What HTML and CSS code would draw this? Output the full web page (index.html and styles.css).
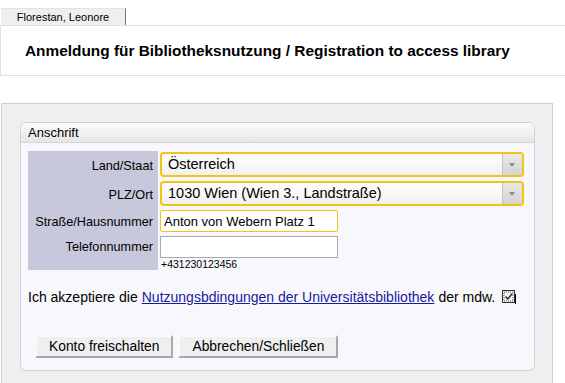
FILE: index.html
```html
<!DOCTYPE html>
<html lang="de">
<head>
    <meta charset="utf-8" />
    <title>Registrierung</title>
    <link rel="stylesheet" href="styles.css">
</head>
<body>
    <div class="tabs">
        <div class="tab">Florestan, Leonore</div>
    </div>
    <div class="header">
        <h1>Anmeldung für Bibliotheksnutzung / Registration to access library</h1>
    </div>

    <div class="panel">
        <div class="box">
            <div class="box-title">Anschrift</div>
            <div class="box-body">
                <div class="form">
                    <div class="row">
                        <div class="label">Land/Staat</div>
                        <div class="field">
                            <div class="select">
                                <span class="select-text">Österreich</span>
                                <span class="select-arrow"></span>
                            </div>
                        </div>
                    </div>
                    <div class="row">
                        <div class="label">PLZ/Ort</div>
                        <div class="field">
                            <div class="select">
                                <span class="select-text">1030 Wien (Wien 3., Landstraße)</span>
                                <span class="select-arrow"></span>
                            </div>
                        </div>
                    </div>
                    <div class="row">
                        <div class="label">Straße/Hausnummer</div>
                        <div class="field">
                            <input type="text" class="text required" value="Anton von Webern Platz 1">
                        </div>
                    </div>
                    <div class="row last">
                        <div class="label">Telefonnummer</div>
                        <div class="field">
                            <input type="text" class="text" value="">
                            <div class="hint">+431230123456</div>
                        </div>
                    </div>
                </div>

                <p class="accept">
                    Ich akzeptiere die <a href="#">Nutzungsbdingungen der Universitätsbibliothek</a> der mdw.
                    <span class="check">
                        <svg width="14" height="14" viewBox="0 0 14 14">
                            <rect x="0.5" y="0.5" width="12" height="12" fill="#f4f4f4" stroke="#333"/>
                            <rect x="2" y="2" width="9" height="9" fill="none" stroke="#555" stroke-dasharray="1 1"/>
                            <path d="M3.5 6.5 L5.8 9 L10 3.8" fill="none" stroke="#222" stroke-width="1.4"/>
                            <line x1="13.5" y1="4" x2="13.5" y2="14" stroke="#000"/>
                        </svg>
                    </span>
                </p>

                <div class="buttons">
                    <button>Konto freischalten</button>
                    <button>Abbrechen/Schließen</button>
                </div>
            </div>
        </div>
    </div>
</body>
</html>
```

FILE: styles.css
```css
body {
    margin: 0;
    font-family: "Liberation Sans", Arial, sans-serif;
    font-size: 13px;
    color: #000;
    background-color: #fff;
}
.tabs {
    padding-top: 8px;
    padding-left: 1px;
    display: flex;
}
.tab {
    width: 125px;
    height: 17px;
    line-height: 17px;
    font-size: 11px;
    text-align: center;
    background-color: #efefef;
    border-right: 1px solid #777;
    border-top: 1px solid #e4e4e4;
    box-sizing: border-box;
}
.header {
    border: 1px solid #e0e0e0;
    border-right: none;
    height: 51px;
    box-sizing: border-box;
    display: flex;
    align-items: center;
    padding-left: 24px;
}
.header h1 {
    margin: 0;
    font-size: 15.4px;
    font-weight: bold;
}
.panel {
    margin: 27px 12px 0 1px;
    background-color: #efefef;
    border: 1px solid #cbcbe0;
    border-bottom: none;
    padding: 18px 17px 12px 18px;
}
.box {
    border: 1px solid #cfcfdf;
    border-radius: 6px;
    background-color: #f8f8fc;
    overflow: hidden;
}
.box-title {
    height: 19px;
    line-height: 19px;
    padding-left: 7px;
    font-size: 13px;
    background: linear-gradient(#fbfbfb, #e6e6e6);
    border-bottom: 1px solid #d4d4dc;
}
.box-body {
    padding: 8px 10px 12px 7px;
}
.form {
    display: flex;
    flex-direction: column;
}
.row {
    display: flex;
}
.label {
    width: 130px;
    flex-shrink: 0;
    background-color: #c8c8dc;
    text-align: right;
    font-size: 12.7px;
    padding-right: 5px;
    box-sizing: border-box;
    display: flex;
    align-items: center;
    justify-content: flex-end;
}
.row .field {
    padding: 1px 0 3px 2px;
    flex: 1;
}
.row.last .label {
    align-items: flex-start;
    padding-top: 5px;
    padding-bottom: 14px;
}
.row.last .field {
    padding-bottom: 0;
}
.select {
    display: flex;
    height: 25px;
    border: 2px solid #f3c512;
    border-radius: 4px;
    background: linear-gradient(#ffffff, #f0f0f0);
    box-sizing: border-box;
    overflow: hidden;
}
.select-text {
    flex: 1;
    font-size: 14.5px;
    line-height: 21px;
    padding-left: 6px;
}
.select-arrow {
    width: 19px;
    border-left: 1px solid #c4c4c4;
    background: linear-gradient(#e8e8e8, #d4d4d4);
    position: relative;
}
.select-arrow::after {
    content: "";
    position: absolute;
    left: 6px;
    top: 9px;
    border-left: 3px solid transparent;
    border-right: 3px solid transparent;
    border-top: 4px solid #8a8a8a;
}
input.text {
    display: block;
    width: 178px;
    height: 22px;
    margin: 0;
    padding: 0 3px;
    font-family: "Liberation Sans", Arial, sans-serif;
    font-size: 13px;
    border: 1px solid #a9a9a9;
    box-sizing: border-box;
    background-color: #fff;
}
input.text.required {
    border-color: #f3c512;
    border-radius: 2px;
}
.hint {
    font-size: 10.5px;
    margin-top: 1px;
    padding-left: 1px;
    line-height: 11px;
}
.accept {
    margin: 19px 0 0 0;
    font-size: 14px;
    display: flex;
    align-items: center;
    gap: 4px;
    white-space: nowrap;
}
.accept a {
    color: #1a1aa0;
}
.check {
    display: inline-flex;
    margin-left: 3px;
}
.buttons {
    margin-top: 30px;
    padding-left: 7px;
    display: flex;
    gap: 5px;
}
button {
    height: 23px;
    padding: 0 12px;
    font-family: "Liberation Sans", Arial, sans-serif;
    font-size: 13.8px;
    background-color: #efefef;
    border: 2px solid;
    border-color: #fafafa #a8a8a8 #a8a8a8 #fafafa;
    color: #000;
}
```
